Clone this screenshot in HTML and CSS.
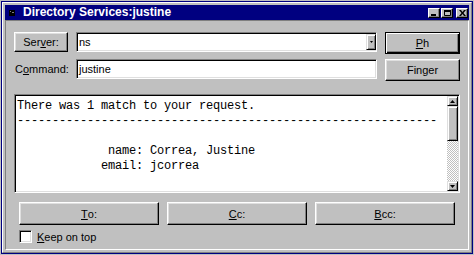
FILE: index.html
```html
<!DOCTYPE html>
<html lang="en">
<head>
    <meta charset="UTF-8">
    <title>Directory Services:justine</title>
    <link rel="stylesheet" href="styles.css">
</head>
<body>
    <div class="window">
        <div class="frame">
            <div class="frame-inner">
                <div class="titlebar">
                    <svg class="app-icon" width="6" height="6" viewBox="0 0 6 6">
                        <rect width="6" height="6" fill="#000"/>
                        <rect x="1" y="1" width="1" height="1" fill="#808080"/>
                        <rect x="3" y="2" width="2" height="1" fill="#808080"/>
                    </svg>
                    <span class="title">Directory Services:justine</span>
                    <div class="caption-buttons">
                        <span class="cap-btn">
                            <svg width="6" height="6" viewBox="0 0 6 6"><rect x="0" y="4" width="5" height="2" fill="#000"/></svg>
                        </span>
                        <span class="cap-btn">
                            <svg width="7" height="6" viewBox="0 0 7 6"><path d="M0.5 0.5h6v5h-6z" fill="none" stroke="#000"/><rect x="0" y="0" width="7" height="2" fill="#000"/></svg>
                        </span>
                        <span class="cap-btn cap-close">
                            <svg width="7" height="6" viewBox="0 0 7 6"><path d="M0 0h2l1.5 2 1.5-2h2l-2.5 3 2.5 3h-2l-1.5-2-1.5 2h-2l2.5-3z" fill="#000"/></svg>
                        </span>
                    </div>
                </div>

                <div class="client">
                    <div class="top">
                        <div class="fields">
                            <div class="row">
                                <button class="btn server-btn">Ser<u>v</u>er:</button>
                                <div class="field combo">
                                    <span class="field-text">ns</span>
                                    <span class="drop">
                                        <svg width="3" height="2" viewBox="0 0 3 2"><path d="M0 0h3l-1.5 2z" fill="#000"/></svg>
                                    </span>
                                </div>
                            </div>
                            <div class="row">
                                <label class="cmd-label">C<u>o</u>mmand:</label>
                                <div class="field">
                                    <span class="field-text">justine</span>
                                </div>
                            </div>
                        </div>
                        <div class="actions">
                            <button class="btn default-btn"><u>P</u>h</button>
                            <button class="btn finger-btn">Finger</button>
                        </div>
                    </div>

                    <div class="output">
<pre class="output-text">There was 1 match to your request.
------------------------------------------------------------

             name: Correa, Justine
            email: jcorrea</pre>
                        <div class="scrollbar">
                            <span class="sb-arrow">
                                <svg width="5" height="3" viewBox="0 0 5 3"><path d="M2.5 0l2.5 3h-5z" fill="#000"/></svg>
                            </span>
                            <span class="sb-thumb"></span>
                            <span class="sb-track"></span>
                            <span class="sb-arrow">
                                <svg width="5" height="3" viewBox="0 0 5 3"><path d="M0 0h5l-2.5 3z" fill="#000"/></svg>
                            </span>
                        </div>
                    </div>

                    <div class="send-row">
                        <button class="btn send-btn"><u>T</u>o:</button>
                        <button class="btn send-btn"><u>C</u>c:</button>
                        <button class="btn send-btn"><u>B</u>cc:</button>
                    </div>

                    <label class="keep">
                        <span class="checkbox"></span>
                        <span><u>K</u>eep on top</span>
                    </label>
                </div>
            </div>
        </div>
    </div>
</body>
</html>
```

FILE: styles.css
```css
body {
    margin: 0;
    background-color: #c0c0c0;
}
.window {
    width: 474px;
    height: 255px;
    box-sizing: border-box;
    border: 1px solid #c0c0c0;
    font-family: 'Liberation Sans', Arial, sans-serif;
    font-size: 11px;
    color: #000;
}
.frame {
    height: 100%;
    box-sizing: border-box;
    border: 1px solid #000080;
}
.frame-inner {
    height: 100%;
    box-sizing: border-box;
    border: 1px solid;
    border-color: #fff #808080 #808080 #fff;
    padding: 2px;
    background-color: #c0c0c0;
    display: flex;
    flex-direction: column;
}

/* title bar */
.titlebar {
    height: 15px;
    flex: none;
    background-color: #000080;
    color: #fff;
    display: flex;
    align-items: center;
}
.app-icon {
    margin-left: 4px;
    display: block;
}
.title {
    margin-left: 8px;
    font-weight: bold;
    font-size: 12px;
    line-height: 15px;
}
.caption-buttons {
    margin-left: auto;
    margin-right: 1px;
    display: flex;
}
.cap-btn {
    width: 12px;
    height: 10px;
    box-sizing: border-box;
    background-color: #c0c0c0;
    border: 1px solid;
    border-color: #fff #000 #000 #fff;
    box-shadow: inset -1px -1px #808080;
    display: flex;
    align-items: center;
    justify-content: center;
    margin-left: 1px;
}
.cap-btn svg {
    display: block;
}
.cap-close {
    margin-left: 3px;
}

/* client area */
.client {
    flex: 1;
    border: 1px solid;
    border-color: #808080 #fff #fff #808080;
    padding: 11px 7px 0 8px;
    display: flex;
    flex-direction: column;
}
.top {
    display: flex;
    align-items: flex-start;
}
.fields {
    display: flex;
    flex-direction: column;
    gap: 7px;
}
.row {
    display: flex;
    align-items: center;
    gap: 8px;
}

.btn {
    font: inherit;
    color: #000;
    background-color: #c0c0c0;
    border: 1px solid;
    border-color: #fff #000 #000 #fff;
    box-shadow: inset -1px -1px #808080, inset 1px 1px #dfdfdf;
    padding: 0;
    margin: 0;
    display: flex;
    align-items: center;
    justify-content: center;
}
.server-btn {
    width: 54px;
    height: 20px;
}
.cmd-label {
    width: 54px;
    padding-left: 1px;
    box-sizing: border-box;
}

.field {
    width: 301px;
    height: 20px;
    box-sizing: border-box;
    border: 1px solid;
    border-color: #808080 #fff #fff #808080;
    box-shadow: inset 1px 1px #000, inset -1px -1px #dfdfdf;
    background-color: #fff;
    padding: 1px 1px 1px 2px;
    display: flex;
    align-items: center;
}
.field-text {
    flex: 1;
}
.drop {
    width: 10px;
    height: 16px;
    box-sizing: border-box;
    background-color: #c0c0c0;
    border: 1px solid;
    border-color: #dfdfdf #000 #000 #dfdfdf;
    box-shadow: inset 1px 1px #fff, inset -1px -1px #808080;
    display: flex;
    align-items: center;
    justify-content: center;
    margin-right: -1px;
}
.drop svg {
    display: block;
}

.actions {
    margin-left: 8px;
    display: flex;
    flex-direction: column;
    gap: 5px;
}
.default-btn,
.finger-btn {
    width: 75px;
    height: 22px;
}
.default-btn {
    border-color: #000;
    box-shadow: inset 1px 1px #fff, inset -1px -1px #000, inset -2px -2px #808080;
}

/* output pane */
.output {
    margin-top: 13px;
    width: 446px;
    height: 99px;
    box-sizing: border-box;
    border: 1px solid;
    border-color: #808080 #fff #fff #808080;
    box-shadow: inset 1px 1px #000, inset -1px -1px #dfdfdf;
    background-color: #fff;
    padding: 1px;
    display: flex;
}
.output-text {
    flex: 1;
    margin: 0;
    padding: 3px 0 0 1px;
    font-family: 'Liberation Mono', 'Courier New', monospace;
    font-size: 12px;
    letter-spacing: -0.2px;
    line-height: 15px;
    overflow: hidden;
}
.scrollbar {
    width: 11px;
    display: flex;
    flex-direction: column;
}
.sb-arrow,
.sb-thumb {
    box-sizing: border-box;
    background-color: #c0c0c0;
    border: 1px solid;
    border-color: #dfdfdf #000 #000 #dfdfdf;
    box-shadow: inset 1px 1px #fff, inset -1px -1px #808080;
}
.sb-arrow {
    height: 10px;
    display: flex;
    align-items: center;
    justify-content: center;
}
.sb-arrow svg {
    display: block;
}
.sb-thumb {
    height: 35px;
}
.sb-track {
    flex: 1;
    background: repeating-conic-gradient(#fff 0 25%, #c0c0c0 0 50%) 0 0 / 2px 2px;
}

/* bottom buttons */
.send-row {
    margin-top: 9px;
    padding-left: 5px;
    display: flex;
    gap: 8px;
}
.send-btn {
    width: 140px;
    height: 23px;
}

.keep {
    margin-top: 5px;
    padding-left: 5px;
    display: flex;
    align-items: center;
    gap: 5px;
}
.checkbox {
    width: 13px;
    height: 13px;
    box-sizing: border-box;
    border: 1px solid;
    border-color: #808080 #fff #fff #808080;
    box-shadow: inset 1px 1px #000, inset -1px -1px #dfdfdf;
    background-color: #fff;
}
```
